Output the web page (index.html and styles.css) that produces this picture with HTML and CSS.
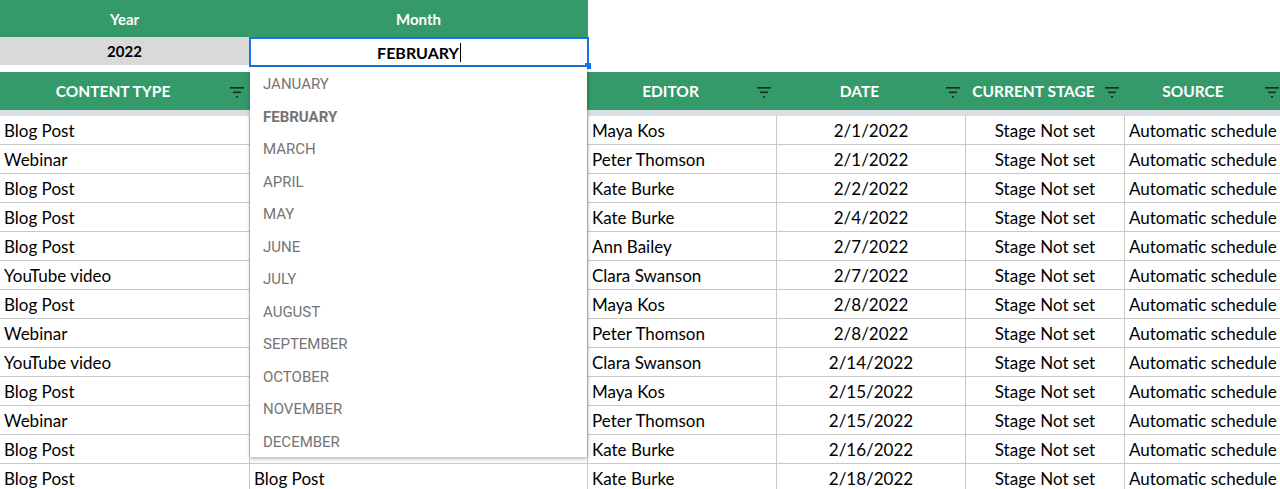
FILE: index.html
```html
<!DOCTYPE html>
<html lang="en">
<head>
    <meta charset="UTF-8">
    <title>Content Calendar</title>
    <link rel="stylesheet" href="styles.css">
</head>
<body>

    <div class="sheet">
        <!-- Pilihan tahun dan bulan -->
        <div class="picker">
            <div class="picker-head">Year</div>
            <div class="picker-head">Month</div>
            <div class="picker-value">2022</div>
            <div class="picker-value month-cell">
                <div class="month-input">FEBRUARY<span class="caret"></span></div>
                <span class="handle"></span>
                <ul class="month-menu">
                    <li>JANUARY</li>
                    <li class="selected">FEBRUARY</li>
                    <li>MARCH</li>
                    <li>APRIL</li>
                    <li>MAY</li>
                    <li>JUNE</li>
                    <li>JULY</li>
                    <li>AUGUST</li>
                    <li>SEPTEMBER</li>
                    <li>OCTOBER</li>
                    <li>NOVEMBER</li>
                    <li>DECEMBER</li>
                </ul>
            </div>
        </div>

        <!-- Tabel konten -->
        <div class="grid head-row">
            <div class="th">CONTENT TYPE <svg class="filter" viewBox="0 0 14 11"><rect x="0" y="0" width="14" height="1.6"/><rect x="3" y="4.5" width="8" height="1.6"/><rect x="6" y="9" width="2" height="1.6"/></svg></div>
            <div class="th"></div>
            <div class="th">EDITOR <svg class="filter" viewBox="0 0 14 11"><rect x="0" y="0" width="14" height="1.6"/><rect x="3" y="4.5" width="8" height="1.6"/><rect x="6" y="9" width="2" height="1.6"/></svg></div>
            <div class="th">DATE <svg class="filter" viewBox="0 0 14 11"><rect x="0" y="0" width="14" height="1.6"/><rect x="3" y="4.5" width="8" height="1.6"/><rect x="6" y="9" width="2" height="1.6"/></svg></div>
            <div class="th">CURRENT STAGE <svg class="filter" viewBox="0 0 14 11"><rect x="0" y="0" width="14" height="1.6"/><rect x="3" y="4.5" width="8" height="1.6"/><rect x="6" y="9" width="2" height="1.6"/></svg></div>
            <div class="th">SOURCE <svg class="filter" viewBox="0 0 14 11"><rect x="0" y="0" width="14" height="1.6"/><rect x="3" y="4.5" width="8" height="1.6"/><rect x="6" y="9" width="2" height="1.6"/></svg></div>
        </div>
        <div class="strip"></div>
        <div id="rows"></div>
    </div>

    <script>
        // kolom kedua tertutup dropdown, hanya baris terakhir yang terlihat
        const rows = [
            ['Blog Post', '', 'Maya Kos', '2/1/2022'],
            ['Webinar', '', 'Peter Thomson', '2/1/2022'],
            ['Blog Post', '', 'Kate Burke', '2/2/2022'],
            ['Blog Post', '', 'Kate Burke', '2/4/2022'],
            ['Blog Post', '', 'Ann Bailey', '2/7/2022'],
            ['YouTube video', '', 'Clara Swanson', '2/7/2022'],
            ['Blog Post', '', 'Maya Kos', '2/8/2022'],
            ['Webinar', '', 'Peter Thomson', '2/8/2022'],
            ['YouTube video', '', 'Clara Swanson', '2/14/2022'],
            ['Blog Post', '', 'Maya Kos', '2/15/2022'],
            ['Webinar', '', 'Peter Thomson', '2/15/2022'],
            ['Blog Post', '', 'Kate Burke', '2/16/2022'],
            ['Blog Post', 'Blog Post', 'Kate Burke', '2/18/2022']
        ];

        const box = document.getElementById('rows');
        rows.forEach(r => {
            const row = document.createElement('div');
            row.className = 'grid data-row';
            row.innerHTML = `
                <div class="td">${r[0]}</div>
                <div class="td">${r[1]}</div>
                <div class="td">${r[2]}</div>
                <div class="td center">${r[3]}</div>
                <div class="td center">Stage Not set</div>
                <div class="td">Automatic schedule</div>
            `;
            box.appendChild(row);
        });
    </script>
</body>
</html>
```

FILE: styles.css
```css
* {
    margin: 0;
    padding: 0;
    box-sizing: border-box;
}

body {
    font-family: Lato, "Open Sans", sans-serif;
    background-color: #fff;
    color: #000;
    overflow: hidden;
    height: 489px;
}

/* Pilihan tahun / bulan */
.picker {
    display: grid;
    grid-template-columns: 249px 339px;
    grid-template-rows: 37px 28px;
    margin-bottom: 7px;
}

.picker-head {
    background-color: #359a69;
    color: #fff;
    font-weight: 700;
    font-size: 15px;
    display: flex;
    align-items: center;
    justify-content: center;
}

.picker-value {
    background-color: #d9d9d9;
    font-weight: 700;
    font-size: 15px;
    display: flex;
    align-items: center;
    justify-content: center;
}

.month-cell {
    position: relative;
    background-color: #fff;
}

.month-input {
    position: absolute;
    left: 0;
    top: 0;
    width: 340px;
    height: 30px;
    border: 2px solid #1a73e8;
    background: #fff;
    display: flex;
    align-items: center;
    justify-content: center;
    font-weight: 700;
    font-size: 16px;
    z-index: 3;
}

.caret {
    display: inline-block;
    width: 1px;
    height: 19px;
    background: #000;
    margin-left: 1px;
}

.handle {
    position: absolute;
    left: 336px;
    top: 26px;
    width: 6px;
    height: 6px;
    background: #1a73e8;
    z-index: 4;
}

.month-menu {
    position: absolute;
    left: 1px;
    top: 30px;
    width: 337px;
    list-style: none;
    background: #fff;
    box-shadow: 0 2px 4px rgba(0, 0, 0, 0.25), 1px 0 3px rgba(0, 0, 0, 0.12);
    font-family: Roboto, sans-serif;
    font-size: 15px;
    font-weight: 400;
    color: #757575;
    z-index: 5;
}

.month-menu li {
    height: 32.5px;
    line-height: 34px;
    padding-left: 13px;
}

.month-menu li.selected {
    font-weight: 700;
}

/* Tabel */
.grid {
    display: grid;
    grid-template-columns: 250px 338px 189px 189px 159px 160px;
}

.head-row {
    height: 38px;
    background-color: #359a69;
}

.th {
    position: relative;
    display: flex;
    align-items: center;
    justify-content: center;
    padding-right: 24px;
    color: #fff;
    font-weight: 700;
    font-size: 15.5px;
    white-space: nowrap;
}

.filter {
    position: absolute;
    right: 6px;
    top: 15px;
    width: 14px;
    height: 11px;
    fill: #1c2a22;
}

.strip {
    height: 6px;
    background-color: #dadee5;
}

.data-row {
    height: 29px;
}

.td {
    border-right: 1px solid #c8c8c8;
    border-bottom: 1px solid #c8c8c8;
    font-size: 17px;
    padding-left: 4px;
    display: flex;
    align-items: center;
    white-space: nowrap;
    overflow: hidden;
}

.td.center {
    justify-content: center;
    padding-left: 0;
}
```
